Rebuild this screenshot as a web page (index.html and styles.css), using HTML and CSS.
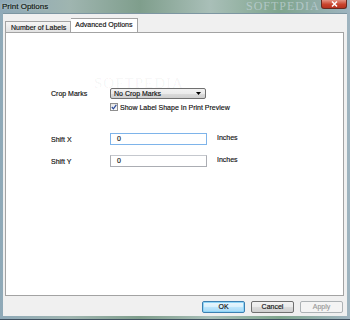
FILE: index.html
```html
<!DOCTYPE html>
<html>
<head>
<meta charset="utf-8">
<link rel="stylesheet" href="styles.css">
</head>
<body>
<div class="window">
  <div class="titlebar">
    <span class="title">Print Options</span>
    <span class="watermark">SOFTPEDIA</span>
    <div class="close"><svg width="7" height="6" viewBox="0 0 7 6"><path d="M1 0.5 L6 5.5 M6 0.5 L1 5.5" stroke="#fff" stroke-width="1.5"/></svg></div>
  </div>
  <div class="client">
    <div class="tabs">
      <div class="tab">Number of Labels</div>
      <div class="tab active">Advanced Options</div>
    </div>
    <div class="panel">
      <span class="wm">SOFTPEDIA</span>
      <div class="row crop">
        <span class="label">Crop Marks</span>
        <div class="select"><span>No Crop Marks</span><svg width="5" height="3" viewBox="0 0 5 3"><path d="M0 0 H5 L2.5 3 Z" fill="#000"/></svg></div>
      </div>
      <div class="row check">
        <span class="label"></span>
        <span class="box"><svg width="6" height="6" viewBox="0 0 6 6"><path d="M0.8 3 L2.4 4.8 L5.3 0.8" stroke="#2a4a9a" stroke-width="1.2" fill="none"/></svg></span>
        <span class="checktext">Show Label Shape In Print Preview</span>
      </div>
      <div class="row shiftx">
        <span class="label">Shift X</span>
        <div class="input">0</div>
        <span class="unit">Inches</span>
      </div>
      <div class="row shifty">
        <span class="label">Shift Y</span>
        <div class="input">0</div>
        <span class="unit">Inches</span>
      </div>
    </div>
    <div class="footer">
      <div class="btn ok">OK</div>
      <div class="btn">Cancel</div>
      <div class="btn disabled">Apply</div>
    </div>
  </div>
</div>
</body>
</html>
```
FILE: styles.css
```css
html, body {
  margin: 0;
  padding: 0;
  width: 350px;
  height: 320px;
  overflow: hidden;
}
body {
  font-family: "Liberation Sans", Arial, sans-serif;
  font-size: 7px;
  color: #111;
  -webkit-text-stroke: 0.15px currentColor;
}
.window {
  width: 350px;
  height: 320px;
  background: linear-gradient(90deg, #8fa9b8 0%, #9fb5b0 20%, #7f9e8c 40%, #a9bfb8 60%, #7fa58d 80%, #9fb4c0 100%);
  display: flex;
  flex-direction: column;
  padding: 0 3px 3px 3px;
  box-sizing: border-box;
  border-bottom: 1px solid #3f4f5f;
}
.titlebar {
  height: 13px;
  display: flex;
  align-items: center;
  position: relative;
  flex: none;
}
.title {
  font-size: 8px;
  color: #0d150f;
  margin-left: -1px;
  text-shadow: 0 0 3px rgba(255,255,255,0.6);
}
.watermark {
  position: absolute;
  left: 243px;
  top: 0;
  font-family: "Liberation Serif", serif;
  font-size: 12px;
  line-height: 13px;
  letter-spacing: 1px;
  color: rgba(205,218,228,0.6);
  -webkit-text-stroke: 0;
}
.close {
  position: absolute;
  right: 0;
  top: 0;
  width: 26px;
  height: 9px;
  background: linear-gradient(#e49383, #c9432c 55%, #b5321f);
  border: 1px solid #6a2a20;
  border-top: none;
  border-radius: 0 0 3px 3px;
  display: flex;
  align-items: center;
  justify-content: center;
  box-sizing: border-box;
}
.client {
  flex: 1;
  background: #f0f0f0;
  display: flex;
  flex-direction: column;
  padding: 5px 3px 0 2px;
  border-top: 1px solid #7d96a2;
}
.tabs {
  display: flex;
  align-items: flex-end;
  height: 13px;
  flex: none;
}
.tab {
  height: 10px;
  line-height: 11px;
  padding: 0 4px 0 5px;
  border: 1px solid #a3a3a3;
  border-bottom: none;
  background: linear-gradient(#f5f5f5, #e2e2e2);
  white-space: nowrap;
}
.tab.active {
  height: 14px;
  background: #fff;
  border-left: none;
  padding: 0 5px 0 4px;
  margin-bottom: -1px;
  position: relative;
  line-height: 11px;
}
.panel {
  flex: none;
  height: 264px;
  background: #fff;
  border: 1px solid #a3a3a3;
  box-sizing: border-box;
  padding-top: 55px;
  padding-left: 45px;
  display: flex;
  flex-direction: column;
  position: relative;
}
.wm {
  position: absolute;
  left: 88px;
  top: 42px;
  font-family: "Liberation Serif", serif;
  font-size: 15px;
  letter-spacing: 1px;
  color: rgba(0,0,0,0.05);
  -webkit-text-stroke: 0;
}
.row {
  display: flex;
  align-items: center;
}
.label {
  width: 59px;
  flex: none;
}
.select {
  width: 96px;
  height: 11px;
  box-sizing: border-box;
  border: 1px solid #707070;
  border-radius: 2px;
  background: linear-gradient(#f2f2f2, #ebebeb 50%, #dcdcdc 50%, #cfcfcf);
  display: flex;
  align-items: center;
  justify-content: space-between;
  padding: 0 4px 0 3px;
}
.check {
  margin-top: 4px;
}
.box {
  width: 8px;
  height: 8px;
  box-sizing: border-box;
  border: 1px solid #8f8f8f;
  background: linear-gradient(#e6e6e6, #fafafa);
  display: flex;
  align-items: center;
  justify-content: center;
  margin-right: 2px;
}
.shiftx {
  margin-top: 22px;
}
.shifty {
  margin-top: 10px;
}
.input {
  width: 97px;
  height: 12px;
  box-sizing: border-box;
  border: 1px solid #abadb3;
  border-top-color: #c5c8ce;
  padding-left: 6px;
  line-height: 10px;
  background: #fff;
}
.shiftx .input {
  border-color: #7eb4ea;
}
.unit {
  margin-left: 10px;
  margin-top: -3px;
}
.footer {
  flex: 1;
  display: flex;
  justify-content: flex-end;
  align-items: center;
  gap: 6px;
  padding-right: 1px;
  padding-top: 1px;
}
.btn {
  width: 43px;
  height: 12px;
  box-sizing: border-box;
  border: 1px solid #707070;
  border-radius: 2px;
  background: linear-gradient(#f2f2f2, #ebebeb 50%, #dddddd 50%, #cfcfcf);
  display: flex;
  align-items: center;
  justify-content: center;
}
.btn.ok {
  border-color: #3c7fb1;
  box-shadow: inset 0 0 0 1px #8fd5f6;
  background: linear-gradient(#eaf6fd, #d9f0fc 50%, #bee6fd 50%, #a7d9f5);
}
.btn.disabled {
  border-color: #adb2b5;
  background: #f4f4f4;
  color: #9a9a9a;
}
```
